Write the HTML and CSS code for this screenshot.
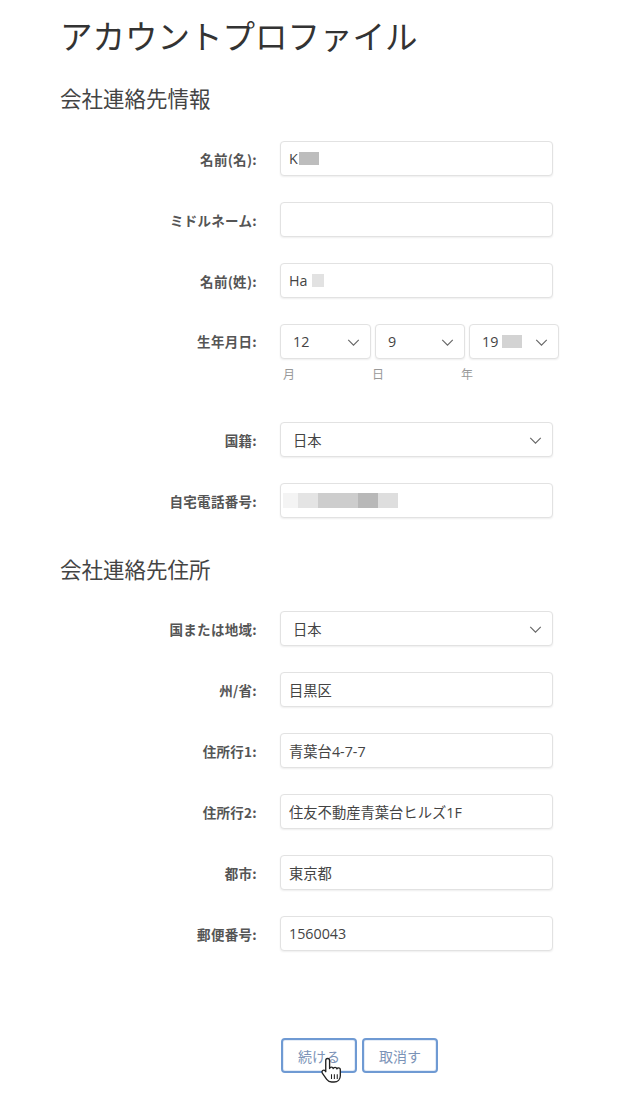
FILE: index.html
```html
<!DOCTYPE html>
<html lang="ja">
<head>
<meta charset="utf-8">
<title>アカウントプロファイル</title>
<link rel="stylesheet" href="styles.css">
</head>
<body>
<main class="page">
  <h1 class="title">アカウントプロファイル</h1>
  <h2 class="section">会社連絡先情報</h2>
  <div class="form">
    <div class="row"><label class="label">名前(名):</label><div class="field">K<span class="blur b1"></span></div></div>
    <div class="row"><label class="label">ミドルネーム:</label><div class="field"></div></div>
    <div class="row"><label class="label">名前(姓):</label><div class="field">Ha<span class="blur b2"></span></div></div>
    <div class="row dob">
      <label class="label">生年月日:</label>
      <div class="dobwrap">
        <div class="selects">
          <div class="field select">12<svg class="chev" viewBox="0 0 14 8"><path d="M1 1l6 6 6-6"/></svg></div>
          <div class="field select">9<svg class="chev" viewBox="0 0 14 8"><path d="M1 1l6 6 6-6"/></svg></div>
          <div class="field select">19<span class="blur b3"></span><svg class="chev" viewBox="0 0 14 8"><path d="M1 1l6 6 6-6"/></svg></div>
        </div>
        <div class="sublabels"><span>月</span><span>日</span><span>年</span></div>
      </div>
    </div>
    <div class="row"><label class="label">国籍:</label><div class="field select">日本<svg class="chev" viewBox="0 0 14 8"><path d="M1 1l6 6 6-6"/></svg></div></div>
    <div class="row"><label class="label">自宅電話番号:</label><div class="field phone"><span class="p p1"></span><span class="p p2"></span><span class="p p3"></span><span class="p p4"></span><span class="p p5"></span></div></div>
  </div>

  <h2 class="section section2">会社連絡先住所</h2>
  <div class="form">
    <div class="row"><label class="label">国または地域:</label><div class="field select">日本<svg class="chev" viewBox="0 0 14 8"><path d="M1 1l6 6 6-6"/></svg></div></div>
    <div class="row"><label class="label">州/省:</label><div class="field">目黒区</div></div>
    <div class="row"><label class="label">住所行1:</label><div class="field">青葉台4-7-7</div></div>
    <div class="row"><label class="label">住所行2:</label><div class="field">住友不動産青葉台ヒルズ1F</div></div>
    <div class="row"><label class="label">都市:</label><div class="field">東京都</div></div>
    <div class="row"><label class="label">郵便番号:</label><div class="field">1560043</div></div>
  </div>

  <div class="actions">
    <button class="btn btn-primary">続ける
      <svg class="cursor" viewBox="0 0 24 28"><path d="M8 2.5c1.2 0 2 .8 2 2v8.5c.3-.9 1-1.4 1.9-1.4 1 0 1.7.6 1.9 1.5.3-.8 1-1.3 1.9-1.3 1 0 1.7.7 1.9 1.6.3-.7 1-1.1 1.7-1.1 1.1 0 1.9.8 1.9 2v6.2c0 3.8-2.7 6.5-6.5 6.5h-2.6c-2.300 0-3.8-.9-5.1-2.7L2.4 17.7c-.6-.9-.4-2 .4-2.6.8-.6 1.9-.5 2.6.3L6 16.3V4.5c0-1.2.8-2 2-2z"/><path class="ln" d="M12 19v5M15 19v5M18 19v5"/></svg>
    </button>
    <button class="btn">取消す</button>
  </div>
</main>
</body>
</html>
```

FILE: styles.css
```css
* { box-sizing: border-box; }
html, body { margin: 0; padding: 0; background: #ffffff; }
body {
  font-family: "Open Sans", "Noto Sans CJK JP", sans-serif;
  color: #444;
  width: 640px;
  height: 1095px;
  overflow: hidden;
}
.page { padding: 15px 0 0 60px; }
.title {
  margin: 0;
  font-family: "Noto Sans CJK JP", sans-serif;
  font-weight: 400;
  font-size: 32.5px;
  line-height: 40px;
  color: #333;
}
.section {
  margin: 29px 0 29px;
  font-family: "Noto Sans CJK JP", sans-serif;
  font-weight: 400;
  font-size: 21.5px;
  line-height: 28px;
  color: #444;
}
.section2 { margin: 37px 0 28px; }
.form { display: flex; flex-direction: column; gap: 26px; }
.row {
  display: grid;
  grid-template-columns: 197px 273px;
  column-gap: 23px;
  align-items: center;
}
.row.dob { align-items: start; }
.row.dob .label { line-height: 35px; }
.label {
  text-align: right;
  font-family: "Noto Sans CJK JP", sans-serif;
  font-weight: 700;
  font-size: 13.5px;
  letter-spacing: 0.3px;
  color: #555;
}
.field {
  position: relative;
  height: 35px;
  border: 1px solid #e2e2e2;
  border-radius: 4px;
  background: #fff;
  box-shadow: 0 1px 2px rgba(0,0,0,0.07);
  padding: 0 12px 0 8px;
  display: flex;
  align-items: center;
  font-size: 14.3px;
  color: #444;
}
.select { padding-left: 12px; }
.chev {
  position: absolute;
  right: 10px;
  top: 14px;
  width: 13px;
  height: 7px;
  fill: none;
  stroke: #666;
  stroke-width: 1.3;
}
.blur { display: inline-block; height: 13px; background: #bdbdbd; }
.b1 { width: 20px; margin-left: 1px; }
.b2 { width: 12px; margin-left: 4px; background: #e2e2e2; }
.b3 { width: 20px; margin-left: 4px; background: #d3d3d3; }
.dobwrap { width: 279px; padding-bottom: 14px; }
.selects {
  display: grid;
  grid-template-columns: 91px 90px 90px;
  column-gap: 4px;
}
.sublabels {
  display: grid;
  grid-template-columns: 89px 90px 90px;
  margin: 7px 0 0 3px;
  font-family: "Noto Sans CJK JP", sans-serif;
  font-size: 12px;
  line-height: 16px;
  color: #999;
}
.sublabels span:nth-child(3) { margin-left: -1px; }
.phone { padding-left: 2px; }
.p { display: inline-block; height: 15px; }
.p1 { width: 15px; background: #f4f4f4; }
.p2 { width: 20px; background: #e4e4e4; }
.p3 { width: 40px; background: #cdcdcd; }
.p4 { width: 20px; background: #b8b8b8; }
.p5 { width: 20px; background: #dedede; }
.actions {
  display: flex;
  gap: 5px;
  margin: 87px 0 0 221px;
}
.btn {
  position: relative;
  width: 76px;
  height: 35px;
  border: 2px solid #6f9ad3;
  border-radius: 4px;
  background: #fff;
  box-shadow: inset 0 0 0 1px #e4ecf7;
  font-family: "Noto Sans CJK JP", sans-serif;
  font-size: 14px;
  color: #7b93b7;
  padding: 0;
}
.cursor {
  position: absolute;
  left: 37px;
  top: 16px;
  width: 23px;
  height: 27px;
  fill: #fff;
  stroke: #222;
  stroke-width: 1.4;
  stroke-linejoin: round;
}
.cursor .ln { fill: none; stroke-width: 1.1; }
```
